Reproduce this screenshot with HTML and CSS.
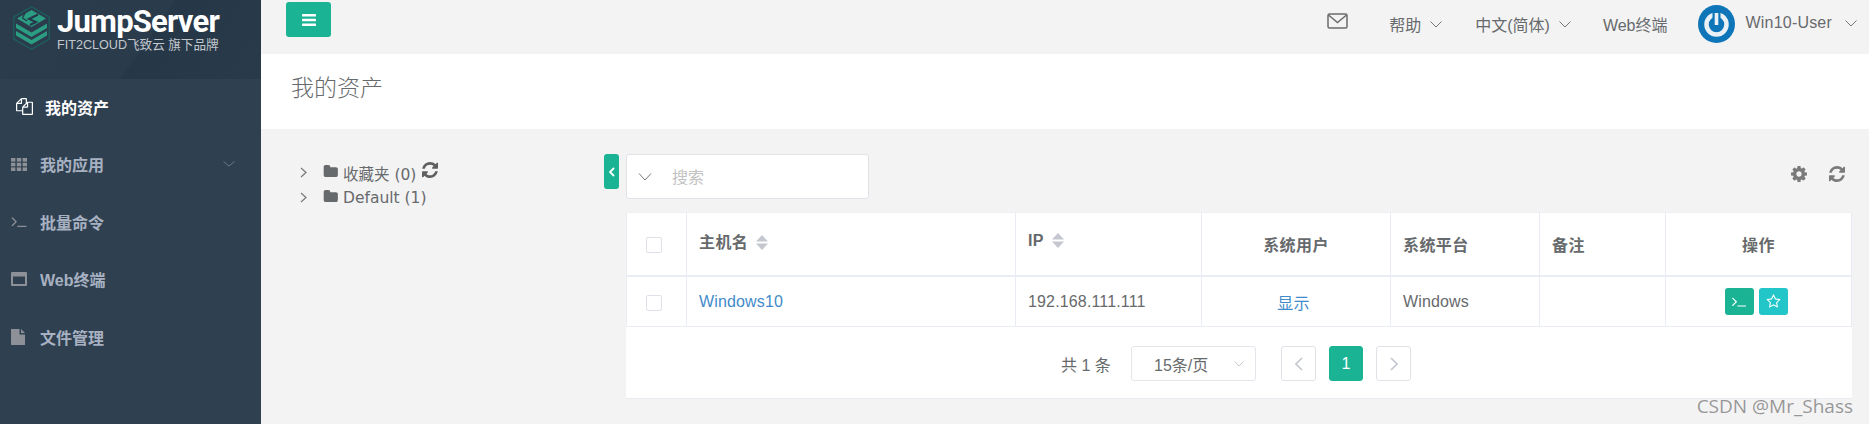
FILE: index.html
```html
<!DOCTYPE html>
<html lang="zh-CN">
<head>
  <meta charset="UTF-8">
  <title>我的资产 - JumpServer</title>
  <link rel="stylesheet" href="styles.css">
</head>
<body>
  <svg class="defs" width="0" height="0">
    <symbol id="i-refresh" viewBox="128 128 1536 1536"><path d="M1639 1056q0 5-1 7-64 268-268 434.5t-478 166.5q-146 0-282.5-55t-243.5-157l-129 129q-19 19-45 19t-45-19-19-45v-448q0-26 19-45t45-19h448q26 0 45 19t19 45-19 45l-137 137q71 66 161 102t187 36q134 0 250-65t186-179q11-17 53-117 8-23 30-23h192q13 0 22.5 9.5t9.500 22.500zm25-800v448q0 26-19 45t-45 19h-448q-26 0-45-19t-19-45 19-45l138-138q-148-137-349-137-134 0-250 65t-186 179q-11 17-53 117-8 23-30 23h-199q-13 0-22.5-9.5t-9.500-22.500v-7q65-268 270-434.500t480-166.500q146 0 284 55.500t245 156.500l130-129q19-19 45-19t45 19 19 45z"/></symbol>
    <symbol id="i-folder" viewBox="0 128 1728 1408"><path d="M1728 608v704q0 92-66 158t-158 66h-1216q-92 0-158-66t-66-158v-960q0-92 66-158t158-66h320q92 0 158 66t66 158v32h672q92 0 158 66t66 158z"/></symbol>
    <symbol id="i-terminal" viewBox="64 320 1664 1216"><path d="M649 983l-466 466q-10 10-23 10t-23-10l-50-50q-10-10-10-23t10-23l393-393-393-393q-10-10-10-23t10-23l50-50q10-10 23-10t23 10l466 466q10 10 10 23t-10 23zm1079 457v64q0 14-9 23t-23 9h-960q-14 0-23-9t-9-23v-64q0-14 9-23t23-9h960q14 0 23 9t9 23z"/></symbol>
    <symbol id="i-sort" viewBox="0 0 12 15"><path d="M6 0 L12 6.500 H0 Z"/><path d="M0 8.500 H12 L6 15 Z"/></symbol>
    <symbol id="i-caret" viewBox="0 0 12 7"><path d="M.5 .5 L6 6 L11.500 .5"/></symbol>
    <symbol id="i-arrow" viewBox="0 0 7 11"><path d="M1 1 L6 5.500 L1 10"/></symbol>
  </svg>

  <aside class="sidebar">
    <div class="logo">
      <svg class="logo-mark" width="37" height="44" viewBox="0 0 37 44">
        <path d="M18.500 .8 L36.200 11 V33 L18.500 43.200 L.8 33 V11 Z" fill="none" stroke="#1d5f60" stroke-width="1.300"/>
        <path d="M3 25 L18.500 34 L34 25 V29.500 L18.500 38.500 L3 29.500 Z" fill="#2a9d82"/>
        <path d="M3 17.500 L18.500 26.500 L34 17.500 V22 L18.500 31 L3 22 Z" fill="#2a9d82"/>
        <path d="M18.500 4 L33 12.500 L18.500 21 L4 12.500 Z" fill="#2a9d82"/>
        <path d="M25 8.500 L16 13 L23 16 L17 19" fill="none" stroke="#253748" stroke-width="2"/>
        <path d="M12 7 L9.500 12 L14 15" fill="none" stroke="#253748" stroke-width="1.200"/>
      </svg>
      <div class="logo-text">
        <div class="logo-name">JumpServer</div>
        <div class="logo-sub">FIT2CLOUD飞致云 旗下品牌</div>
      </div>
    </div>
    <ul class="nav">
      <li class="nav-item active">
        <svg class="nav-icon" width="17" height="17" viewBox="0 0 1792 1792"><path d="M1696 384q40 0 68 28t28 68v1216q0 40-28 68t-68 28h-960q-40 0-68-28t-28-68v-288h-544q-40 0-68-28t-28-68v-672q0-40 20-88t48-76l408-408q28-28 76-48t88-20h416q40 0 68 28t28 68v328q68-40 128-40h416zm-544 213l-299 299h299v-299zm-640-384l-299 299h299v-299zm196 647l316-316v-416h-384v416q0 40-28 68t-68 28h-416v640h512v-256q0-40 20-88t48-76zm956 804v-1152h-384v416q0 40-28 68t-68 28h-416v640h896z"/></svg>
        我的资产
      </li>
      <li class="nav-item">
        <svg class="nav-icon" width="16" height="13" viewBox="0 0 16 13">
          <rect width="4.400" height="3.600"/><rect x="5.800" width="4.400" height="3.600"/><rect x="11.600" width="4.400" height="3.600"/>
          <rect y="4.700" width="4.400" height="3.600"/><rect x="5.800" y="4.700" width="4.400" height="3.600"/><rect x="11.600" y="4.700" width="4.400" height="3.600"/>
          <rect y="9.400" width="4.400" height="3.600"/><rect x="5.800" y="9.400" width="4.400" height="3.600"/><rect x="11.600" y="9.400" width="4.400" height="3.600"/>
        </svg>
        我的应用
        <svg class="nav-arrow" width="12" height="6" viewBox="0 0 12 7" preserveAspectRatio="none"><use href="#i-caret"/></svg>
      </li>
      <li class="nav-item">
        <svg class="nav-icon" width="16" height="11"><use href="#i-terminal"/></svg>
        批量命令
      </li>
      <li class="nav-item">
        <svg class="nav-icon" width="16" height="14" viewBox="0 0 16 14"><path fill-rule="evenodd" d="M1 0 H15 Q16 0 16 1 V13 Q16 14 15 14 H1 Q0 14 0 13 V1 Q0 0 1 0 Z M2 4.500 V12 H14 V4.500 Z"/></svg>
        Web终端
      </li>
      <li class="nav-item">
        <svg class="nav-icon" width="14" height="16" viewBox="0 0 14 16"><path d="M0 0 H8.500 V5.500 H14 V16 H0 Z"/><path d="M10 0 L14 4 H10 Z"/></svg>
        文件管理
      </li>
    </ul>
  </aside>

  <main class="main">
    <header class="topbar">
      <button class="menu-btn">
        <svg width="14" height="12" viewBox="0 0 14 12" fill="#fff"><rect width="14" height="2.600" rx=".6"/><rect y="4.700" width="14" height="2.600" rx=".6"/><rect y="9.400" width="14" height="2.600" rx=".6"/></svg>
      </button>
      <div class="topbar-right">
        <svg class="mail" width="21" height="16" viewBox="0 0 21 16" fill="none" stroke="#6b6b6b" stroke-width="1.500"><rect x="1" y="1" width="19" height="14" rx="1.500"/><path d="M1.500 2 L10.500 9.500 L19.500 2"/></svg>
        <span class="top-link help">帮助<svg class="caret" width="12" height="7"><use href="#i-caret"/></svg></span>
        <span class="top-link lang">中文(简体)<svg class="caret" width="12" height="7"><use href="#i-caret"/></svg></span>
        <span class="top-link web">Web终端</span>
        <svg class="avatar" width="37" height="38" viewBox="0 0 37 38">
          <ellipse cx="18.500" cy="19" rx="18.500" ry="19" fill="#0e76b8"/>
          <circle cx="18.500" cy="19.500" r="10" fill="none" stroke="#e9f1f6" stroke-width="4.500"/>
          <rect x="14.500" y="4" width="8" height="12" fill="#0e76b8"/>
          <rect x="16.700" y="8" width="3.600" height="12" fill="#e9f1f6"/>
        </svg>
        <span class="top-link user">Win10-User<svg class="caret" width="12" height="7"><use href="#i-caret"/></svg></span>
      </div>
    </header>

    <div class="page-title"><h2>我的资产</h2></div>

    <div class="content">
      <div class="tree">
        <div class="tree-row">
          <svg class="tree-arrow" width="7" height="11"><use href="#i-arrow"/></svg>
          <svg class="folder" width="15" height="12"><use href="#i-folder"/></svg>
          <span class="tree-label"><span class="cjk">收藏夹</span> (0)</span>
          <svg class="tree-refresh" width="16" height="16"><use href="#i-refresh"/></svg>
        </div>
        <div class="tree-row">
          <svg class="tree-arrow" width="7" height="11"><use href="#i-arrow"/></svg>
          <svg class="folder" width="15" height="12"><use href="#i-folder"/></svg>
          <span class="tree-label">Default (1)</span>
        </div>
      </div>

      <button class="tree-toggle">
        <svg width="6" height="10" viewBox="0 0 6 10" fill="none" stroke="#fff" stroke-width="1.800"><path d="M5 1 L1 5 L5 9"/></svg>
      </button>

      <div class="assets">
        <div class="toolbar">
          <div class="search">
            <svg width="14" height="8" viewBox="0 0 14 8" fill="none" stroke="#777" stroke-width="1"><path d="M1 .5 L7 7 L13 .5"/></svg>
            <span>搜索</span>
          </div>
          <div class="tools">
            <svg width="16" height="16" viewBox="128 128 1536 1536"><path d="M1152 896q0-106-75-181t-181-75-181 75-75 181 75 181 181 75 181-75 75-181zm512-109v222q0 12-8 23t-20 13l-185 28q-19 54-39 91 35 50 107 138 10 12 10 25t-9 23q-27 37-99 108t-94 71q-12 0-26-9l-138-108q-44 23-91 38-16 136-29 186-7 28-36 28h-222q-14 0-24.500-8.500t-11.500-21.500l-28-184q-49-16-90-37l-141 107q-10 9-25 9-14 0-25-11-126-114-165-168-7-10-7-23 0-12 8-23 15-21 51-66.500t54-70.500q-27-50-41-99l-183-27q-13-2-21-12.500t-8-23.500v-222q0-12 8-23t19-13l186-28q14-46 39-92-40-57-107-138-10-12-10-24 0-10 9-23 26-36 98.500-107.500t94.500-71.500q13 0 26 10l138 107q44-23 91-38 16-136 29-186 7-28 36-28h222q14 0 24.500 8.500t11.500 21.500l28 184q49 16 90 37l142-107q9-9 24-9 13 0 25 10 129 119 165 170 7 8 7 22 0 12-8 23-15 21-51 66.500t-54 70.500q26 50 41 98l183 28q13 2 21 12.500t8 23.500z"/></svg>
            <svg width="16" height="16"><use href="#i-refresh"/></svg>
          </div>
        </div>

        <div class="panel">
          <table class="asset-table">
            <colgroup>
              <col class="col-check"><col class="col-host"><col class="col-ip"><col class="col-user"><col class="col-platform"><col class="col-note"><col class="col-action">
            </colgroup>
            <thead>
              <tr>
                <th class="check-cell"><span class="checkbox"></span></th>
                <th class="sortable">主机名<svg class="sort" width="12" height="15"><use href="#i-sort"/></svg></th>
                <th class="sortable">IP<svg class="sort" width="12" height="15"><use href="#i-sort"/></svg></th>
                <th class="center">系统用户</th>
                <th>系统平台</th>
                <th>备注</th>
                <th class="center">操作</th>
              </tr>
            </thead>
            <tbody>
              <tr>
                <td class="check-cell"><span class="checkbox"></span></td>
                <td><a>Windows10</a></td>
                <td>192.168.111.111</td>
                <td class="center"><a class="show-link">显示</a></td>
                <td>Windows</td>
                <td></td>
                <td class="center action-cell">
                  <span class="action-btns">
                    <span class="action green"><svg width="14" height="11" fill="#fff"><use href="#i-terminal"/></svg></span>
                    <span class="action cyan"><svg width="15" height="15" viewBox="0 0 1792 1792" fill="#fff"><path d="M1201 1004l306-297-422-62-189-382-189 382-422 62 306 297-73 421 378-199 377 199zm527-357q0 22-26 48l-363 354 86 500q1 7 1 20 0 50-41 50-19 0-40-12l-449-236-449 236q-22 12-40 12-21 0-31.500-14.500t-10.500-35.500q0-6 2-20l86-500-364-354q-25-27-25-48 0-37 56-46l502-73 225-455q19-41 49-41t49 41l225 455 502 73q56 9 56 46z"/></svg></span>
                  </span>
                </td>
              </tr>
            </tbody>
          </table>

          <div class="pager">
            <span class="total">共 1 条</span>
            <span class="page-size">15条/页<svg width="10" height="6" viewBox="0 0 10 6" fill="none" stroke="#c5c8cf" stroke-width="1"><path d="M.5 .5 L5 5 L9.500 .5"/></svg></span>
            <span class="page-btn"><svg width="8" height="14" viewBox="0 0 8 14" fill="none" stroke="#c4c7cf" stroke-width="1.600"><path d="M7 1 L1 7 L7 13"/></svg></span>
            <span class="page-btn current">1</span>
            <span class="page-btn"><svg width="8" height="14" viewBox="0 0 8 14" fill="none" stroke="#c4c7cf" stroke-width="1.600"><path d="M1 1 L7 7 L1 13"/></svg></span>
          </div>
        </div>
        <div class="watermark">CSDN @Mr_Shass</div>
      </div>
    </div>
  </main>
</body>
</html>
```

FILE: styles.css
```css
* {
  box-sizing: border-box;
}

html, body {
  height: 100%;
}

body {
  margin: 0;
  display: flex;
  overflow: hidden;
  font-family: "Liberation Sans", "Noto Sans CJK SC", sans-serif;
  font-size: 16px;
  color: #676a6c;
  background: #f3f3f4;
}

.defs {
  position: absolute;
}

/* sidebar */
.sidebar {
  width: 261px;
  flex: none;
  background: #2f4050;
}

.logo {
  height: 79px;
  padding: 6px 0 0 13px;
  display: flex;
  gap: 7px;
  background: linear-gradient(125deg, #2b3c4c 0%, #2a3b4b 55%, #263748 56%, #293a4a 100%);
}

.logo-name {
  font-family: Roboto, sans-serif;
  font-weight: 700;
  font-size: 31px;
  line-height: 31px;
  color: #fff;
  letter-spacing: -0.8px;
}

.logo-sub {
  font-size: 12.600px;
  line-height: 14px;
  margin-top: 1px;
  color: #c3c8cd;
  white-space: nowrap;
}

.nav {
  list-style: none;
  margin: 0;
  padding: 0;
}

.nav-item {
  height: 57.500px;
  display: flex;
  align-items: center;
  padding: 0 0 2px 11px;
  font-size: 16px;
  font-weight: 700;
  color: #a7b1c2;
  position: relative;
}

.nav-icon {
  margin-right: 13px;
  fill: #8d9096;
}

.nav-item:nth-child(5) .nav-icon {
  margin-right: 15px;
}

.nav-item.active {
  color: #fff;
  padding-left: 16px;
}

.nav-item.active .nav-icon {
  margin-right: 12px;
  fill: #fff;
}

.nav-arrow {
  position: absolute;
  left: 223px;
  top: 24px;
  fill: none;
  stroke: #6f7f8e;
  stroke-width: 1;
}

/* top bar */
.main {
  flex: 1;
  min-width: 0;
  display: flex;
  flex-direction: column;
}

.topbar {
  height: 54px;
  flex: none;
  padding: 2px 0 0 25px;
  display: flex;
  justify-content: space-between;
}

.menu-btn {
  width: 45px;
  height: 35px;
  padding: 0;
  border: none;
  border-radius: 3px;
  background: #1ab394;
  display: flex;
  align-items: center;
  justify-content: center;
}

.topbar-right {
  display: flex;
  align-items: center;
  height: 44px;
  padding-right: 12px;
}

.mail {
  margin: -6px 41px 0 0;
}

.top-link {
  display: flex;
  align-items: center;
  color: #676a6c;
  white-space: nowrap;
}

.caret {
  margin-left: 9px;
  fill: none;
  stroke: #777;
  stroke-width: 1;
}

.help {
  margin-right: 33px;
}

.lang {
  margin-right: 32px;
}

.web {
  margin-right: 30px;
}

.avatar {
  margin-right: 11px;
}

.user {
  letter-spacing: 0.2px;
  margin-top: -2px;
}

.user .caret {
  margin-left: 13px;
}

/* page title */
.page-title {
  height: 75px;
  flex: none;
  background: #fff;
  padding-left: 30px;
  display: flex;
  align-items: center;
}

.page-title h2 {
  margin: -12px 0 0;
  font-size: 23px;
  font-weight: 200;
  color: #676a6c;
}

/* content */
.content {
  flex: 1;
  display: flex;
  align-items: flex-start;
  padding: 25px 17px 0 0;
  min-height: 0;
}

.tree {
  width: 343px;
  flex: none;
  padding: 6px 0 0 39px;
}

.tree-row {
  height: 25px;
  display: flex;
  align-items: center;
}

.tree-arrow {
  fill: none;
  stroke: #777;
  stroke-width: 1.200;
  margin-right: 16px;
}

.folder {
  fill: #676a6c;
  margin: -3px 5px 0 0;
}

.tree-label {
  font-family: "DejaVu Sans", "Noto Sans CJK SC", sans-serif;
  font-size: 15.500px;
  white-space: nowrap;
}

.cjk {
  font-size: 15.500px;
}

.tree-refresh {
  fill: #5f5f5f;
  margin: -6px 0 0 6px;
}

.tree-toggle {
  width: 15px;
  height: 35px;
  padding: 0;
  flex: none;
  margin-right: 7px;
  border: none;
  border-radius: 3px;
  background: #1ab394;
  display: flex;
  align-items: center;
  justify-content: center;
}

.assets {
  flex: 1;
  min-width: 0;
  position: relative;
}

.toolbar {
  height: 58px;
  display: flex;
  justify-content: space-between;
  align-items: flex-start;
}

.search {
  width: 243px;
  height: 45px;
  background: #fff;
  border: 1px solid #e0e2e8;
  border-radius: 3px;
  display: flex;
  align-items: center;
  padding-left: 11px;
  color: #c2c2c2;
}

.search span {
  margin: -2px 0 0 20px;
}

.tools {
  display: flex;
  gap: 22px;
  padding: 12px 7px 0 0;
  fill: #7a7a7a;
}

.panel {
  height: 186px;
  background: #fff;
  box-shadow: 0 1px 0 #e8ebf0;
}

.asset-table {
  width: 100%;
  table-layout: fixed;
  border-collapse: collapse;
  letter-spacing: 0.15px;
}

.col-check { width: 60px; }
.col-host { width: 329px; }
.col-ip { width: 186px; }
.col-user { width: 189px; }
.col-platform { width: 149px; }
.col-note { width: 126px; }

.asset-table th,
.asset-table td {
  border: 1px solid #e9ecf2;
  padding: 0 0 0 12px;
  text-align: left;
  vertical-align: middle;
}

.asset-table th {
  height: 63px;
  padding-top: 1px;
  font-weight: 700;
  letter-spacing: 0.4px;
  border-bottom-width: 2px;
  border-top-color: #eef0f4;
}

.asset-table th.sortable {
  padding: 0 0 5px 12px;
}

.asset-table td {
  height: 51px;
  padding-top: 2px;
}

.asset-table .center {
  text-align: center;
  padding-left: 0;
}

.asset-table .check-cell {
  padding-left: 19px;
}

.asset-table a {
  color: #428bca;
}

.show-link {
  margin-right: 5px;
}

.checkbox {
  display: inline-block;
  vertical-align: middle;
  width: 16px;
  height: 16px;
  background: #fff;
  border: 1px solid #dfe1e8;
  border-radius: 2px;
}

.sort {
  fill: #c4c7cf;
  margin-left: 8px;
  vertical-align: -2px;
}

.asset-table td.action-cell {
  padding: 0 5px 0 0;
}

.action-btns {
  display: inline-flex;
  gap: 5px;
  vertical-align: middle;
}

.action {
  width: 29px;
  height: 27px;
  border-radius: 3px;
  display: flex;
  align-items: center;
  justify-content: center;
}

.green {
  background: #1ab394;
}

.cyan {
  background: #23c6c8;
}

/* pagination */
.pager {
  display: flex;
  align-items: center;
  padding: 19px 0 0 435px;
}

.total {
  width: 70px;
  white-space: nowrap;
}

.page-size {
  width: 125px;
  height: 35px;
  border: 1px solid #e4e6eb;
  border-radius: 3px;
  margin-right: 25px;
  display: flex;
  align-items: center;
  justify-content: space-between;
  padding: 0 11px 0 22px;
}

.page-btn {
  width: 35px;
  height: 35px;
  border: 1px solid #e0e2e8;
  border-radius: 3px;
  margin-right: 13px;
  display: flex;
  align-items: center;
  justify-content: center;
}

.page-btn.current {
  width: 34px;
  background: #1ab394;
  border-color: #1ab394;
  color: #fff;
}

.watermark {
  position: absolute;
  right: -1px;
  top: 240px;
  font-family: "Open Sans", sans-serif;
  font-size: 19px;
  line-height: 24px;
  color: rgba(120, 120, 120, 0.75);
  white-space: nowrap;
}
```
